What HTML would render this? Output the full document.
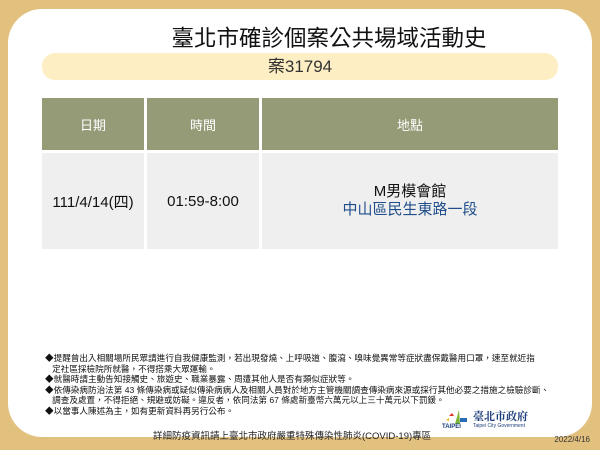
<!DOCTYPE html>
<html><head><meta charset="utf-8"><style>
*{margin:0;padding:0;box-sizing:border-box}
body{width:600px;height:450px;background:#e2c07e;position:relative;overflow:hidden;font-family:"Liberation Sans","Noto Sans CJK TC",sans-serif}
.card{position:absolute;left:8px;top:9px;width:584px;height:428px;background:#fff;border-radius:34px}
.t{position:absolute;left:168px;width:322px;top:21px;text-align:center;font-size:22.5px;color:#111;white-space:nowrap}
.pill{position:absolute;left:42px;top:53px;width:516px;height:27px;background:#fdefc3;border-radius:13px;text-align:center;font-size:17px;line-height:27px;color:#333}
.c{position:absolute;display:flex;align-items:center;justify-content:center;text-align:center}
.h{top:98px;height:52px;background:#959a77;color:#fff;font-size:13px}
.b{top:153px;height:96px;background:#efefef;font-size:15px;color:#111}
.notes{position:absolute;left:45px;top:353px;font-size:8.6px;line-height:10.6px;color:#111;white-space:nowrap}
.foot{position:absolute;left:153px;top:428px;font-size:9.5px;color:#222;white-space:nowrap}
.date{position:absolute;right:10px;top:435px;font-size:8px;color:#333}
</style></head><body>
<div class="card"></div>
<div class="t">臺北市確診個案公共場域活動史</div>
<div class="pill">案31794</div>
<div class="c h" style="left:42px;width:102px">日期</div>
<div class="c h" style="left:147px;width:112px">時間</div>
<div class="c h" style="left:262px;width:296px">地點</div>
<div class="c b" style="left:42px;width:102px">111/4/14(四)</div>
<div class="c b" style="left:147px;width:112px">01:59-8:00</div>
<div class="c b" style="left:262px;width:296px;flex-direction:column;line-height:18px"><div>M男模會館</div><div style="color:#1f4e8a">中山區民生東路一段</div></div>
<div class="notes">◆提醒曾出入相關場所民眾請進行自我健康監測，若出現發燒、上呼吸道、腹瀉、嗅味覺異常等症狀盡保戴醫用口罩，速至就近指<br>&nbsp;&nbsp;&nbsp;定社區採檢院所就醫，不得搭乘大眾運輸。<br>◆就醫時請主動告知接觸史、旅遊史、職業暴露、周遭其他人是否有類似症狀等。<br>◆依傳染病防治法第 43 條傳染病或疑似傳染病病人及相關人員對於地方主管機關調查傳染病來源或採行其他必要之措施之檢驗診斷、<br>&nbsp;&nbsp;&nbsp;調查及處置，不得拒絕、規避或妨礙。違反者，依同法第 67 條處新臺幣六萬元以上三十萬元以下罰鍰。<br>◆以當事人陳述為主，如有更新資料再另行公布。</div>
<div class="foot">詳細防疫資訊請上臺北市政府嚴重特殊傳染性肺炎(COVID-19)專區</div>
<svg style="position:absolute;left:443px;top:408px" width="28" height="18"><path d="M6 8 l3 -3 l2 3z" fill="#e0342a"/><path d="M12 16 L16 2 L17 16z" fill="#7ab536"/><path d="M17 10 h7 v4 h-7z" fill="#2a6bb5"/><path d="M3 12 l3 -2 v3z" fill="#f2b61b"/></svg>
<div style="position:absolute;left:442px;top:424px;font-size:6px;font-weight:bold;color:#1a3d7c">TAIPEI</div>
<div style="position:absolute;left:473px;top:408px;font-size:11px;font-family:'Noto Serif CJK SC',serif;color:#1a3d7c;font-weight:bold">臺北市政府</div>
<div style="position:absolute;left:473px;top:423px;font-size:5px;color:#1a3d7c">Taipei City Government</div>
<div class="date">2022/4/16</div>
</body></html>
